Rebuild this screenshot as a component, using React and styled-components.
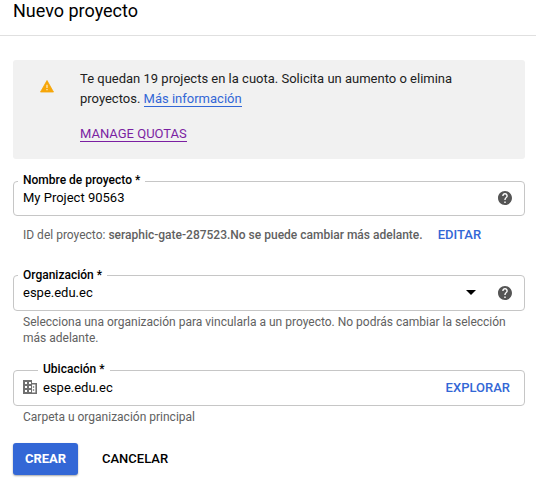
import React from "react";
import styled, { createGlobalStyle } from "styled-components";

const Global = createGlobalStyle`
  * { box-sizing: border-box; }
  body { margin: 0; background: #fff; font-family: Roboto, sans-serif; color: #000; overflow: hidden; }
`;

const Page = styled.main`
  width: 536px;
  height: 489px;
  overflow: hidden;
  background: #fff;
`;

const Title = styled.h1`
  margin: 0;
  height: 36px;
  padding-left: 13px;
  border-bottom: 1px solid #e0e0e0;
  font-size: 18px;
  line-height: 22px;
  font-weight: 400;
`;

const Body = styled.div`
  display: flex;
  flex-direction: column;
  width: 512px;
  margin: 24px 0 0 13px;
`;

const Notice = styled.section`
  display: flex;
  height: 99px;
  padding: 9px 0 0 27px;
  border-radius: 3px;
  background: #f1f1f1;
  font-size: 13px;
  line-height: 20px;
  color: #212121;
`;

const WarningIcon = styled.svg`
  flex: none;
  margin-top: 11px;
`;

const NoticeText = styled.div`
  margin-left: 26px;
`;

const Link = styled.a`
  color: ${(p) => (p.$visited ? "#7b1fa2" : "#3367d6")};
  border-bottom: 1px solid currentColor;
`;

const Manage = styled.div`
  margin-top: 15px;
`;

const Field = styled.div`
  position: relative;
  display: flex;
  align-items: center;
  height: ${(p) => p.$height || 36}px;
  margin-top: ${(p) => p.$top}px;
  padding: 0 12px 0 9px;
  border: 1px solid #c6c6c6;
  border-radius: 4px;
  font-size: 13px;
  line-height: 16px;
`;

const Label = styled.span`
  position: absolute;
  top: ${(p) => p.$top || -9}px;
  left: ${(p) => p.$left}px;
  padding: 0 5px;
  background: #fff;
  font-size: 12px;
  line-height: 14px;
  font-weight: 500;
`;

const Value = styled.span`
  flex: 1;
  padding-bottom: 1px;
`;

const Hint = styled.p`
  margin: ${(p) => p.$top}px 0 0;
  padding-left: 10px;
  font-size: 12px;
  line-height: 16px;
  color: #616161;
`;

const ProjectId = styled(Hint)`
  display: flex;
  gap: 15px;
`;

const Strong = styled.b`
  font-weight: 500;
`;

const TextAction = styled.button`
  border: 0;
  padding: 0;
  background: none;
  font: 500 13px/16px Roboto, sans-serif;
  color: ${(p) => p.$color || "#3367d6"};
`;

const Explore = styled(TextAction)`
  margin-right: 2px;
  padding-bottom: 1px;
`;

const Actions = styled.div`
  display: flex;
  gap: 24px;
  margin-top: 18px;
`;

const Create = styled(TextAction)`
  width: 65px;
  height: 32px;
  border-radius: 3px;
  background: #3367d6;
  font-weight: 700;
  box-shadow: 0 1px 2px rgba(0, 0, 0, 0.35);
`;

const Caret = styled.span`
  margin: 0 22px 1px 0;
  border: 5px solid transparent;
  border-top-color: #000;
  border-bottom: 0;
`;

const BuildingIcon = styled.svg`
  flex: none;
  margin: 0 6px 2px 0;
`;

const HelpIcon = styled.svg`
  flex: none;
  margin-bottom: ${(p) => p.$lift || 0}px;
`;

const Warning = () => (
  <WarningIcon width="14" height="13" viewBox="0 0 14 13">
    <path fill="#f6a609" d="M7 .5 13.500 12H.5z" stroke="#f6a609" strokeWidth=".8" strokeLinejoin="round" />
    <path fill="#fff" fillOpacity=".8" d="M6.400 4.800h1.200V8H6.400zM6.400 9h1.200v1.200H6.400z" />
  </WarningIcon>
);

const Help = ({ lift }) => (
  <HelpIcon $lift={lift} width="14" height="14" viewBox="2 2 20 20" fill="#555">
    <path d="M12 2C6.48 2 2 6.48 2 12s4.480 10 10 10 10-4.480 10-10S17.520 2 12 2zm1 17h-2v-2h2v2zm2.070-7.750-.9.920C13.450 12.900 13 13.500 13 15h-2v-.5c0-1.100.450-2.100 1.170-2.830l1.240-1.260c.370-.360.590-.860.590-1.410 0-1.100-.9-2-2-2s-2 .9-2 2H8c0-2.210 1.790-4 4-4s4 1.790 4 4c0 .880-.360 1.680-.930 2.250z" />
  </HelpIcon>
);

const Building = () => (
  <BuildingIcon width="14" height="14" viewBox="0 0 14 14" fill="#707070">
    <path
      fillRule="evenodd"
      d="M0 0h9v3h5v11H0zM2 2v2h2V2zM6 2v2h2V2zM2 6v2h2V6zM6 6v2h2V6zM2 10v2h2v-2zM6 10v2h2v-2zM9 4.600v7.800h3.400V4.600z"
    />
    <path d="M9.800 6.200h1.400v1.500H9.800zM9.800 9.300h1.400v1.500H9.800z" />
  </BuildingIcon>
);

export default function App() {
  return (
    <Page>
      <Global />
      <Title>Nuevo proyecto</Title>
      <Body>
        <Notice>
          <Warning />
          <NoticeText>
            Te quedan 19 projects en la cuota. Solicita un aumento o elimina<br />
            proyectos. <Link>Más información</Link>
            <Manage><Link $visited>MANAGE QUOTAS</Link></Manage>
          </NoticeText>
        </Notice>
        <Field $top={22} $height={35}>
          <Label $left={4}>Nombre de proyecto *</Label>
          <Value>My Project 90563</Value>
          <Help lift={1} />
        </Field>
        <ProjectId $top={11} as="div">
          <span>ID del proyecto: <Strong>seraphic-gate-287523.No se puede cambiar más adelante.</Strong></span>
          <TextAction>EDITAR</TextAction>
        </ProjectId>
        <Field $top={32}>
          <Label $left={4} $top={-8}>Organización *</Label>
          <Value>espe.edu.ec</Value>
          <Caret />
          <Help />
        </Field>
        <Hint $top={3}>Selecciona una organización para vincularla a un proyecto. No podrás cambiar la selección más adelante.</Hint>
        <Field $top={24}>
          <Label $left={24}>Ubicación *</Label>
          <Building />
          <Value>espe.edu.ec</Value>
          <Explore>EXPLORAR</Explore>
        </Field>
        <Hint $top={3}>Carpeta u organización principal</Hint>
        <Actions>
          <Create $color="#fff">CREAR</Create>
          <TextAction $color="#000">CANCELAR</TextAction>
        </Actions>
      </Body>
    </Page>
  );
}
